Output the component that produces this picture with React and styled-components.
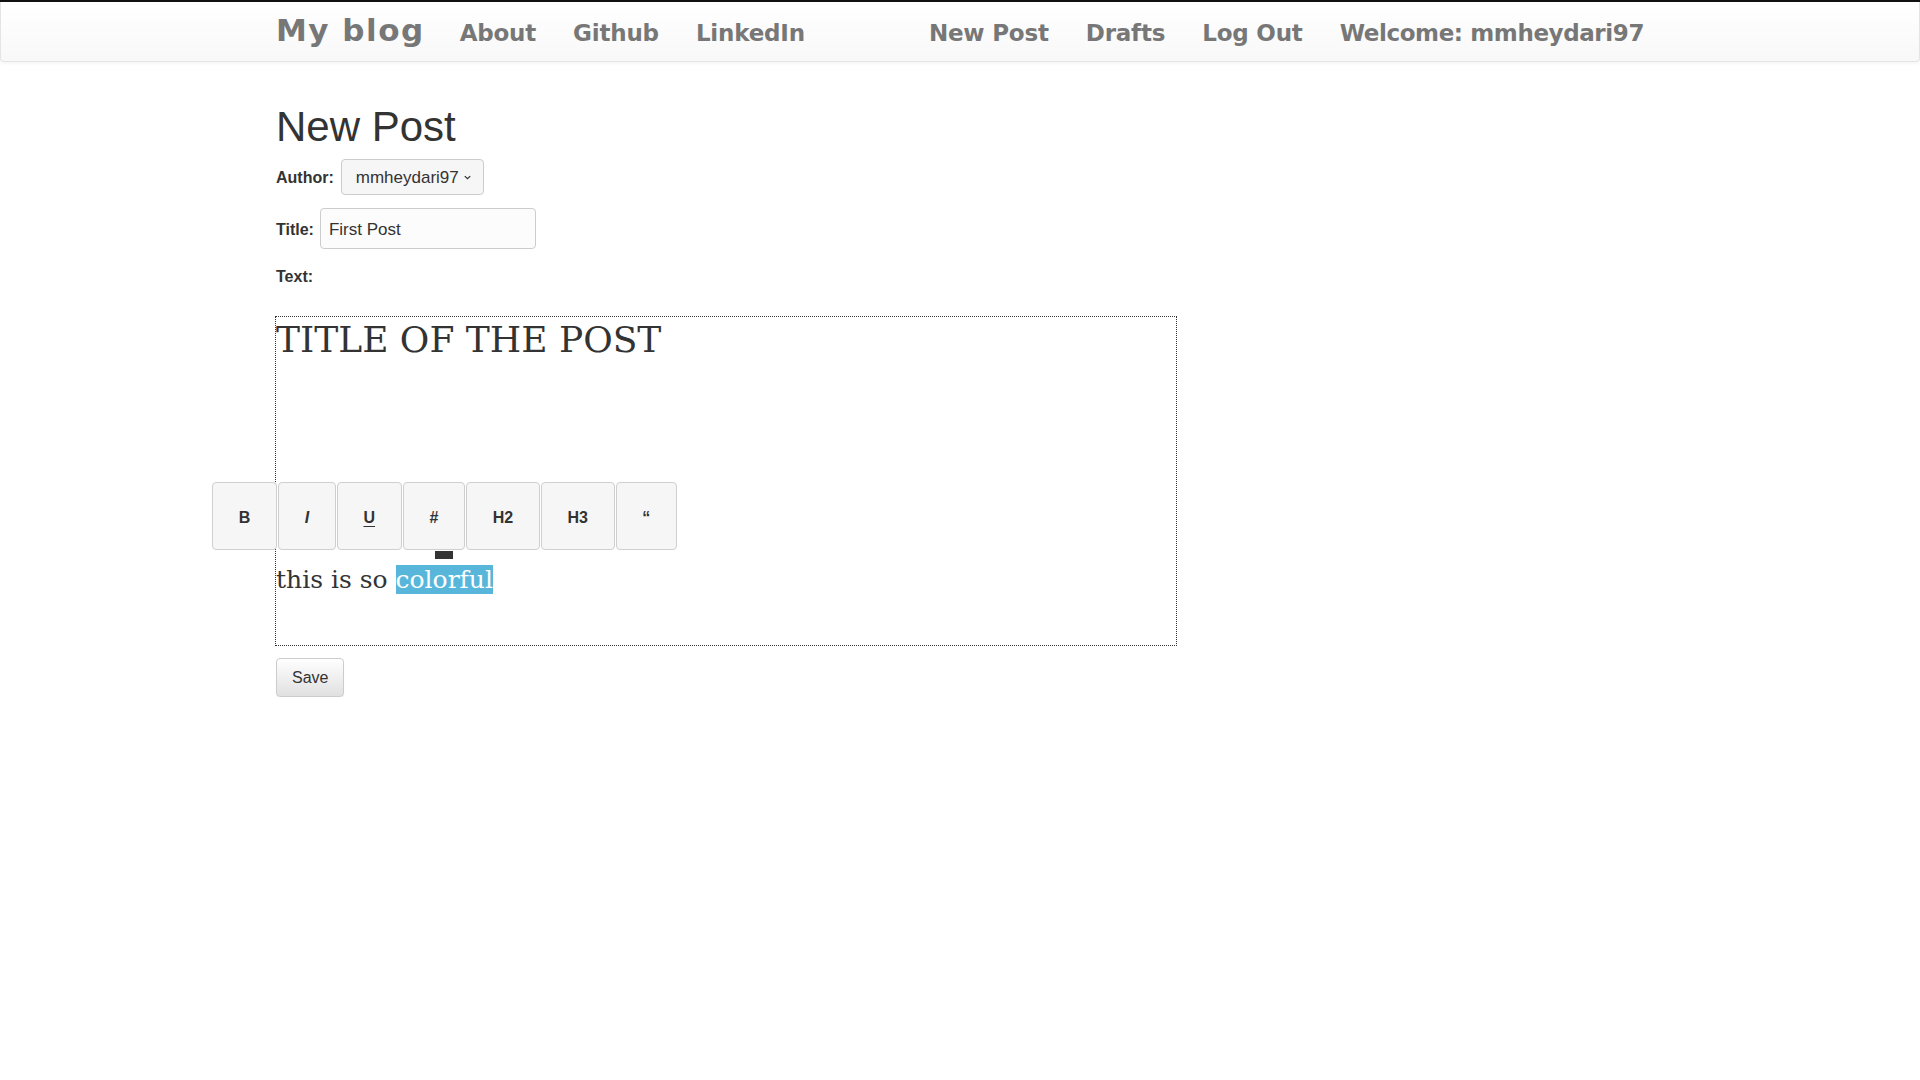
import styled, { createGlobalStyle } from "styled-components";

const GlobalStyle = createGlobalStyle`
  html, body {
    margin: 0;
    padding: 0;
    background: #fff;
  }
  body {
    border-top: 2px solid #111;
    font-family: "Liberation Sans", Arial, sans-serif;
    color: #333;
  }
  * {
    box-sizing: border-box;
  }
`;

const Navbar = styled.nav`
  height: 60px;
  background: linear-gradient(to bottom, #ffffff 0%, #f8f8f8 100%);
  border: 1px solid #e4e4e4;
  border-top: none;
  border-radius: 0 0 4px 4px;
  box-shadow: 0 1px 4px rgba(0, 0, 0, 0.06);
`;

const NavInner = styled.div`
  width: 1368px;
  margin: 0 auto;
  padding-top: 13px;
  display: flex;
  align-items: baseline;
  font-family: "DejaVu Sans", Verdana, sans-serif;
  font-weight: bold;
  color: #777;
  line-height: 1;
`;

const Brand = styled.a`
  font-size: 31px;
  letter-spacing: 1.5px;
  margin-right: 35px;
  color: inherit;
  text-decoration: none;
`;

const NavGroup = styled.div`
  display: flex;
  align-items: baseline;
  gap: 37px;
  margin-left: ${(p) => (p.$right ? "auto" : "0")};
`;

const NavLink = styled.a`
  font-size: 23px;
  letter-spacing: ${(p) => (p.$tight ? "-0.4px" : "-0.2px")};
  color: inherit;
  text-decoration: none;
`;

const Main = styled.main`
  width: 1368px;
  margin: 0 auto;
`;

const Heading = styled.h1`
  margin: 42px 0 9px;
  font-size: 42px;
  font-weight: 500;
  line-height: 1.1;
  color: #333;
`;

const FieldRow = styled.div`
  display: flex;
  align-items: baseline;
  gap: ${(p) => p.$gap || 6}px;
  margin-bottom: ${(p) => p.$mb || 0}px;
`;

const Label = styled.label`
  font-size: 16px;
  font-weight: bold;
  color: #333;
  line-height: 18px;
`;

const SelectBox = styled.div`
  width: 143px;
  height: 36px;
  display: flex;
  align-items: center;
  gap: 5px;
  padding: 0 12px 0 14px;
  background: #f6f6f6;
  border: 1px solid #ccc;
  border-radius: 4px;
  color: #333;

  select {
    appearance: none;
    border: none;
    background: transparent;
    padding: 0;
    margin: 0;
    font-family: "Liberation Sans", Arial, sans-serif;
    font-size: 17px;
    color: #333;
    outline: none;
  }
`;

const TextInput = styled.input`
  width: 216px;
  height: 41px;
  padding: 3px 8px 0;
  background: #fcfcfc;
  border: 1px solid #ccc;
  border-radius: 4px;
  font-family: "Liberation Sans", Arial, sans-serif;
  font-size: 17px;
  color: #333;
  outline: none;
`;

const TextLabel = styled(Label)`
  display: block;
  margin: 19px 0 30px;
`;

const Editor = styled.div`
  position: relative;
  width: 902px;
  height: 330px;
  margin-left: -1px;
  border: 1px dotted #333;
  font-family: "DejaVu Serif", "Liberation Serif", serif;
  color: #333;
`;

const PostTitle = styled.h1`
  margin: 0;
  font-size: 36px;
  font-weight: normal;
  line-height: 1.25;
`;

const Paragraph = styled.p`
  margin: 200px 0 0;
  font-size: 25px;
  line-height: 1.4;
`;

const Selected = styled.span`
  background: #57b6da;
  color: #fff;
`;

const Toolbar = styled.div`
  position: absolute;
  left: -64px;
  top: 165px;
  display: flex;
  gap: 1px;
  font-family: "Liberation Sans", Arial, sans-serif;
`;

const ToolButton = styled.button`
  height: 68px;
  padding: 3px 25.7px 0;
  background: #f6f6f6;
  border: 1px solid #cfcfcf;
  border-radius: 4px;
  font-family: "Liberation Sans", Arial, sans-serif;
  font-size: 16px;
  font-weight: bold;
  font-style: ${(p) => (p.$italic ? "italic" : "normal")};
  text-decoration: ${(p) => (p.$underline ? "underline" : "none")};
  text-underline-offset: 3px;
  color: #333;
  cursor: pointer;
`;

const ToolArrow = styled.span`
  position: absolute;
  left: 223px;
  top: 69px;
  width: 18px;
  height: 8px;
  background: #333;
`;

const SaveButton = styled.button`
  margin-top: 12px;
  height: 39px;
  padding: 0 15px;
  background: linear-gradient(to bottom, #ffffff 0%, #e0e0e0 100%);
  border: 1px solid #ccc;
  border-radius: 4px;
  font-family: "Liberation Sans", Arial, sans-serif;
  font-size: 16px;
  color: #333;
  box-shadow: inset 0 1px 0 rgba(255, 255, 255, 0.15), 0 1px 1px rgba(0, 0, 0, 0.075);
  cursor: pointer;
`;

const Chevron = () => (
  <svg width="11" height="7" viewBox="0 0 11 7" fill="none" style={{ alignSelf: "center" }}>
    <path d="M1.2 1.3L5.5 5.3l4.3-4" stroke="#333" strokeWidth="2" />
  </svg>
);

const tools = [
  { label: "B" },
  { label: "I", italic: true },
  { label: "U", underline: true },
  { label: "#" },
  { label: "H2" },
  { label: "H3" },
  { label: "\u201C" },
];

const App = () => {
  return (
    <>
      <GlobalStyle />
      <Navbar>
        <NavInner>
          <Brand href="#">My blog</Brand>
          <NavGroup>
            <NavLink href="#">About</NavLink>
            <NavLink href="#">Github</NavLink>
            <NavLink href="#">LinkedIn</NavLink>
          </NavGroup>
          <NavGroup $right>
            <NavLink href="#">New Post</NavLink>
            <NavLink href="#">Drafts</NavLink>
            <NavLink href="#">Log Out</NavLink>
            <NavLink href="#" $tight>Welcome: mmheydari97</NavLink>
          </NavGroup>
        </NavInner>
      </Navbar>
      <Main>
        <Heading>New Post</Heading>
        <FieldRow $gap={7} $mb={13}>
          <Label>Author:</Label>
          <SelectBox>
            <select defaultValue="mmheydari97">
              <option>mmheydari97</option>
            </select>
            <Chevron />
          </SelectBox>
        </FieldRow>
        <FieldRow $gap={6}>
          <Label>Title:</Label>
          <TextInput defaultValue="First Post" />
        </FieldRow>
        <TextLabel>Text:</TextLabel>
        <Editor>
          <PostTitle>TITLE OF THE POST</PostTitle>
          <Paragraph>
            this is so <Selected>colorful</Selected>
          </Paragraph>
          <Toolbar>
            {tools.map((t) => (
              <ToolButton key={t.label} $italic={t.italic} $underline={t.underline}>
                {t.label}
              </ToolButton>
            ))}
            <ToolArrow />
          </Toolbar>
        </Editor>
        <SaveButton>Save</SaveButton>
      </Main>
    </>
  );
};

export default App;
